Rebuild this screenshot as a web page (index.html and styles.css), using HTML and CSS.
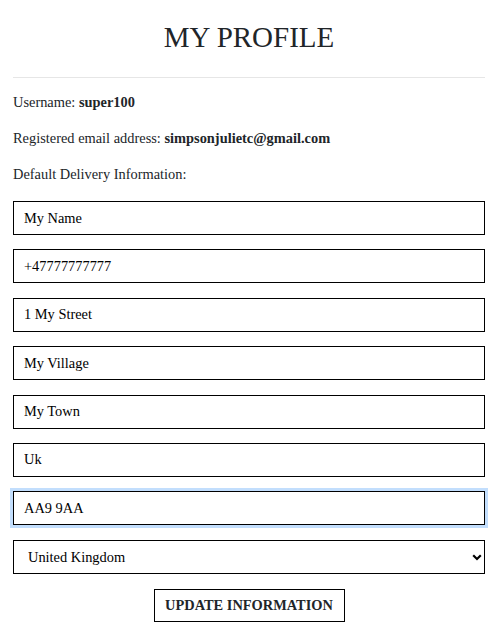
FILE: index.html
```html
<!DOCTYPE html>
<html>
<head>
<meta charset="utf-8">
<link rel="stylesheet" href="styles.css">
</head>
<body>
<div class="page">
  <h1 class="title">MY PROFILE</h1>
  <hr class="rule">
  <p class="info first">Username: <strong>super100</strong></p>
  <p class="info">Registered email address: <strong>simpsonjulietc@gmail.com</strong></p>
  <p class="info">Default Delivery Information:</p>
  <form class="form">
    <input class="field" type="text" value="My Name">
    <input class="field" type="text" value="+47777777777">
    <input class="field" type="text" value="1 My Street">
    <input class="field" type="text" value="My Village">
    <input class="field" type="text" value="My Town">
    <input class="field" type="text" value="Uk">
    <input class="field focused" type="text" value="AA9 9AA">
    <div class="select-wrap">
      <select class="field select">
        <option>United Kingdom</option>
      </select>
      <svg class="chev" width="10" height="7" viewBox="0 0 10 7"><path d="M1.2 1.3 L5 5 L8.8 1.3" fill="none" stroke="#000" stroke-width="2.2"/></svg>
    </div>
    <div class="actions">
      <button class="btn" type="button">UPDATE INFORMATION</button>
    </div>
  </form>
</div>
</body>
</html>
```
FILE: styles.css
```css
html, body {
  margin: 0;
  padding: 0;
  background: #fff;
}
body {
  font-family: "Liberation Serif", "Times New Roman", serif;
  color: #212529;
  font-size: 14.4px;
}
.page {
  padding: 0 13px;
}
.title {
  font-weight: normal;
  font-size: 29px;
  text-align: center;
  margin: 0;
  padding-top: 19px;
  line-height: 36px;
}
.rule {
  border: 0;
  border-top: 1px solid #e6e6e6;
  margin: 22px 0 0 0;
}
.info {
  margin: 16px 0 0 0;
  line-height: 20px;
}
.info.first {
  margin-top: 14px;
}
.form {
  display: flex;
  flex-direction: column;
  gap: 14.4px;
  margin-top: 17px;
}
.field {
  box-sizing: border-box;
  width: 100%;
  height: 34px;
  margin: 0;
  border: 1px solid #000;
  border-radius: 0;
  padding: 0 10px;
  font-family: "Liberation Serif", "Times New Roman", serif;
  font-size: 14.4px;
  color: #000;
  background: #fff;
  outline: none;
}
.focused {
  box-shadow: 0 0 0 3px #c2defd;
}
.select-wrap {
  position: relative;
}
.select {
  appearance: none;
  -webkit-appearance: none;
  padding-left: 14px;
}
.chev {
  position: absolute;
  right: 3px;
  top: 14px;
  pointer-events: none;
}
.actions {
  display: flex;
  justify-content: center;
  margin-top: 1px;
}
.btn {
  box-sizing: border-box;
  width: 191px;
  height: 33px;
  border: 1px solid #000;
  background: #fff;
  border-radius: 0;
  font-family: "Liberation Serif", "Times New Roman", serif;
  font-weight: bold;
  font-size: 14.4px;
  color: #212529;
  padding: 0;
}
```
